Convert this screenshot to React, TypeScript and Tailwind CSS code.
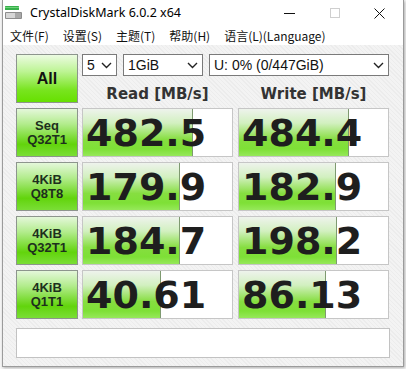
import React from "react";

const rows = [
  { l1: "Seq", l2: "Q32T1", read: "482.5", write: "484.4" },
  { l1: "4KiB", l2: "Q8T8", read: "179.9", write: "182.9" },
  { l1: "4KiB", l2: "Q32T1", read: "184.7", write: "198.2" },
  { l1: "4KiB", l2: "Q1T1", read: "40.61", write: "86.13" },
];

// CDM draws its meter on a log scale
const meter = (v: string) => Math.max(0, Math.min(100, ((Math.log10(parseFloat(v)) + 1) / 5) * 100));

function Chevron() {
  return (
    <svg width="11" height="7" viewBox="0 0 11 7" className="shrink-0">
      <polyline points="1,1 5.5,5.5 10,1" fill="none" stroke="#222" strokeWidth="1.4" />
    </svg>
  );
}

function Select({ text, className }: { text: string; className: string }) {
  return (
    <div
      className={`h-[22px] bg-white border border-[#7a7a7a] flex items-center justify-between pl-[4px] pr-[4px] text-[14px] text-[#111] font-['Liberation_Sans',sans-serif] ${className}`}
    >
      <span>{text}</span>
      <Chevron />
    </div>
  );
}

function ValueCell({ value }: { value: string }) {
  return (
    <div className="relative w-[151px] h-[49px] bg-white border border-[#c6c6c6] overflow-hidden">
      <div
        className="absolute left-0 top-0 bottom-0 border-r border-[#7e9a70] bg-[linear-gradient(to_bottom,#eef3ec_0%,#d2f0c0_30%,#86de40_65%,#7ee036_85%,#96e85a_100%)]"
        style={{ width: `${meter(value)}%` }}
      />
      <div className="relative h-full flex items-center pl-[3px] text-[38px] leading-none font-bold text-[#1e1e1e] font-['DejaVu_Sans',sans-serif]">
        {value}
      </div>
    </div>
  );
}

function Label({ l1, l2 }: { l1: string; l2: string }) {
  return (
    <div className="w-[62px] h-[49px] border border-[#8d958d] bg-[linear-gradient(to_bottom,#e4f7da_0%,#b2ec8c_32%,#62d40c_75%,#7ade36_100%)] flex flex-col items-center justify-center text-[13px] leading-[14px] font-bold text-[#1d2f1d] font-['Liberation_Sans',sans-serif]">
      <span>{l1}</span>
      <span>{l2}</span>
    </div>
  );
}

export default function App() {
  return (
    <div className="w-[406px] h-[369px] bg-[#f7f7f7] overflow-hidden">
      <div className="w-[402px] h-[367px] ml-[2px] bg-white border border-t-0 border-[#9b9b9b] shadow-[1px_1px_3px_rgba(0,0,0,0.3)] flex flex-col">
        {/* title bar */}
        <div className="h-[26px] flex items-center bg-white">
          <svg width="18" height="16" viewBox="0 0 18 16" className="ml-[2px] mt-[1px]">
            <rect x="0" y="0" width="14" height="4" rx="0.5" fill="#36b04a" />
            <rect x="0" y="1" width="14" height="1" fill="#6fd27a" />
            <rect x="0" y="6" width="17" height="7" rx="1" fill="#8c8c8c" />
            <rect x="1" y="7" width="9" height="5" fill="#d6d6d6" />
            <rect x="10" y="7" width="6" height="5" fill="#a8a8a8" />
          </svg>
          <span className="ml-[7px] text-[12.5px] text-black font-['Noto_Sans',sans-serif]">
            CrystalDiskMark 6.0.2 x64
          </span>
          <div className="ml-auto flex items-center">
            <div className="w-[45px] h-[26px] flex items-center justify-center">
              <div className="w-[11px] h-px bg-[#111]" />
            </div>
            <div className="w-[45px] h-[26px] flex items-center justify-center">
              <div className="w-[10px] h-[10px] border border-[#cfcfcf]" />
            </div>
            <div className="w-[45px] h-[26px] flex items-center justify-center mr-[1px]">
              <svg width="11" height="11" viewBox="0 0 11 11">
                <path d="M0.5 0.5 L10.5 10.5 M10.5 0.5 L0.5 10.5" stroke="#111" strokeWidth="1" />
              </svg>
            </div>
          </div>
        </div>

        {/* menu bar */}
        <div className="h-[19px] flex items-center pl-[7px] gap-[14px] text-[12px] text-[#111] font-['Noto_Sans_CJK_SC','Noto_Sans',sans-serif] bg-white">
          <span>文件(F)</span>
          <span>设置(S)</span>
          <span>主题(T)</span>
          <span>帮助(H)</span>
          <span>语言(L)(Language)</span>
        </div>

        {/* body */}
        <div className="flex-1 pt-[9px] pl-[13px] bg-[#f1f1f1] bg-[repeating-linear-gradient(45deg,#f3f3f3_0px,#f3f3f3_2px,#ececec_2px,#ececec_3px)]">
          <div className="flex gap-[4px]">
            <div className="w-[62px] h-[49px] border border-[#8d958d] bg-[linear-gradient(to_bottom,#ecfbe2_0%,#bdf494_35%,#78e41e_75%,#66e000_100%)] flex items-center justify-center text-[16px] font-bold text-[#111] font-['Liberation_Sans',sans-serif]">
              All
            </div>
            <div className="flex flex-col w-[307px]">
              <div className="flex gap-[6px]">
                <Select text="5" className="w-[35px]" />
                <Select text="1GiB" className="w-[80px]" />
                <Select text="U: 0% (0/447GiB)" className="w-[180px]" />
              </div>
              <div className="flex gap-[5px] pt-[9px] text-[15px] leading-[18px] font-bold text-[#333] font-['DejaVu_Sans',sans-serif]">
                <div className="w-[151px] text-center">Read [MB/s]</div>
                <div className="w-[151px] text-center">Write [MB/s]</div>
              </div>
            </div>
          </div>

          <div className="flex flex-col gap-[5px] mt-[5px]">
            {rows.map((r) => (
              <div key={r.read} className="flex gap-[4px]">
                <Label l1={r.l1} l2={r.l2} />
                <div className="flex gap-[5px]">
                  <ValueCell value={r.read} />
                  <ValueCell value={r.write} />
                </div>
              </div>
            ))}
          </div>

          {/* comment box */}
          <div className="mt-[9px] w-[374px] h-[30px] bg-white border border-[#c2c2c2]" />
        </div>
      </div>
    </div>
  );
}
